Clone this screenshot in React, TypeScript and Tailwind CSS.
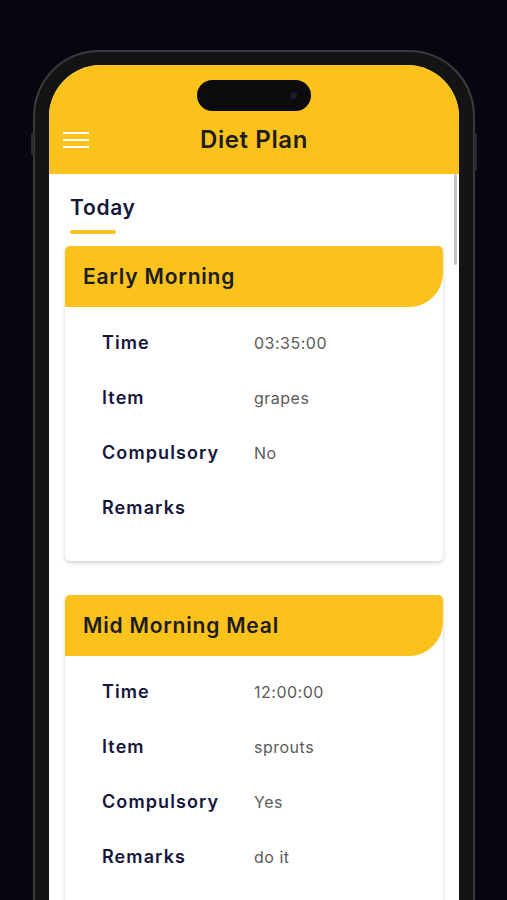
import React from "react";

type Row = { label: string; value: string };
type Meal = { title: string; rows: Row[] };

const meals: Meal[] = [
  {
    title: "Early Morning",
    rows: [
      { label: "Time", value: "03:35:00" },
      { label: "Item", value: "grapes" },
      { label: "Compulsory", value: "No" },
      { label: "Remarks", value: "" },
    ],
  },
  {
    title: "Mid Morning Meal",
    rows: [
      { label: "Time", value: "12:00:00" },
      { label: "Item", value: "sprouts" },
      { label: "Compulsory", value: "Yes" },
      { label: "Remarks", value: "do it" },
    ],
  },
];

function MealCard({ meal }: { meal: Meal }) {
  return (
    <div className="rounded-[5px] bg-white shadow-[0_2px_4px_rgba(0,0,0,0.18)]">
      <div className="flex h-[61px] items-center rounded-t-[5px] rounded-br-[34px] bg-[#fbc21c] pl-[18px]">
        <span className="text-[21px] font-semibold tracking-[0.8px] text-[#1b1b22]">{meal.title}</span>
      </div>
      <div className="pt-[8px] pb-[26px]">
        {meal.rows.map((row) => (
          <div key={row.label} className="flex h-[55px] items-center pl-[37px]">
            <span className="w-[152px] text-[18px] font-semibold tracking-[1.1px] text-[#15163c]">{row.label}</span>
            <span className="text-[16px] tracking-[0.5px] text-[#5b5b5b]">{row.value}</span>
          </div>
        ))}
      </div>
    </div>
  );
}

export default function App() {
  return (
    <div
      className="h-[900px] w-[507px] overflow-hidden bg-[#05060f] pt-[50px] pl-[33px]"
      style={{ fontFamily: "Inter, 'Open Sans', sans-serif" }}
    >
      <div className="relative h-[900px] w-[442px] rounded-t-[66px] border-[2px] border-b-0 border-[#3b3b3d] bg-[#141414] px-[14px] pt-[13px]">
        <div className="absolute top-[80px] -left-[4px] h-[24px] w-[3px] rounded-l bg-[#2a2a2c]" />
        <div className="absolute top-[80px] -right-[4px] h-[40px] w-[3px] rounded-r bg-[#2a2a2c]" />
        <div className="relative h-full overflow-hidden rounded-t-[52px] bg-white">
          <div className="absolute top-[15px] left-1/2 h-[31px] w-[114px] -translate-x-1/2 rounded-full bg-[#0b0b0d]">
            <div className="absolute top-[12px] right-[14px] h-[7px] w-[7px] rounded-full bg-[#1b1d2e]" />
          </div>
          <div className="flex h-[109px] items-center bg-[#fbc21c] px-[14px] pt-[40px]">
            <div className="flex w-[26px] flex-col gap-[5px]">
              <div className="h-[2px] bg-white" />
              <div className="h-[2px] bg-white" />
              <div className="h-[2px] bg-white" />
            </div>
            <div className="flex-1 pr-[26px] text-center text-[24px] leading-[30px] font-semibold tracking-[0.6px] text-[#1c1c22]">
              Diet Plan
            </div>
          </div>
          <div className="absolute top-[109px] right-[2px] h-[91px] w-[3px] rounded bg-[#c4c4c4]" />
          <div className="px-[16px]">
            <div className="pt-[20px] pl-[5px]">
              <div className="text-[21px] leading-[28px] font-semibold tracking-[0.7px] text-[#16173a]">Today</div>
              <div className="mt-[8px] h-[4px] w-[46px] rounded-sm bg-[#fbc21c]" />
            </div>
            <div className="mt-[12px] flex flex-col gap-[34px]">
              {meals.map((m) => (
                <MealCard key={m.title} meal={m} />
              ))}
            </div>
          </div>
        </div>
      </div>
    </div>
  );
}
